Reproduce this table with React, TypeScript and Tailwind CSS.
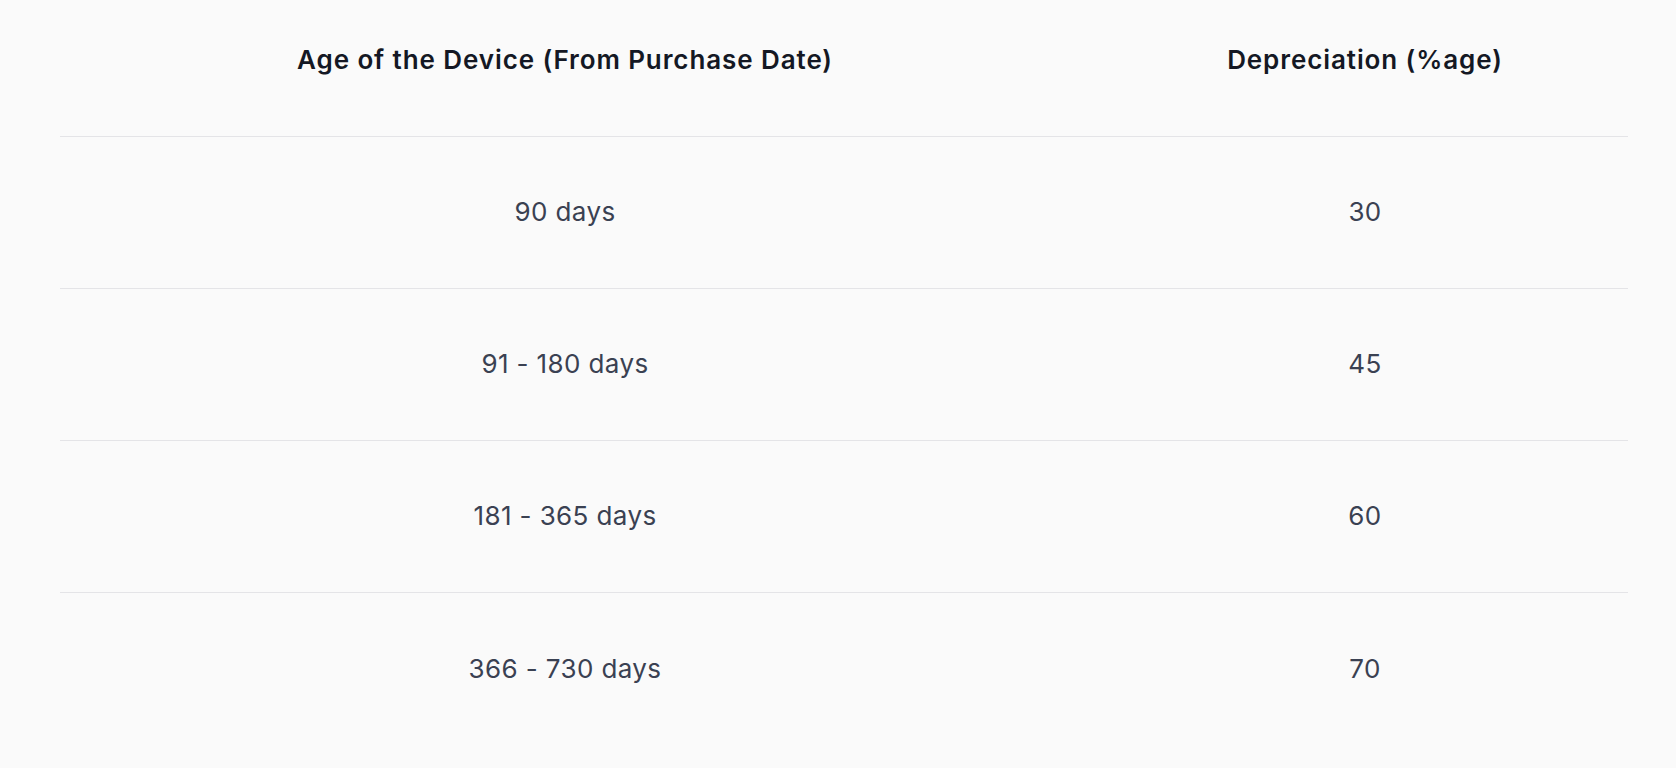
const rows = [
  { age: "90 days", pct: "30" },
  { age: "91 - 180 days", pct: "45" },
  { age: "181 - 365 days", pct: "60" },
  { age: "366 - 730 days", pct: "70" },
];

export default function App() {
  return (
    <div className="min-h-screen bg-[#fafafa] px-[60px] font-['Inter',sans-serif]">
      <div className="w-[1568px]">
        <div className="grid grid-cols-[1010px_1fr] h-[137px] border-b border-[#e4e4e7] pb-[17px] items-center">
          <div className="text-center text-[26px] font-semibold tracking-[0.035em] text-[#141824]">Age of the Device (From Purchase Date)</div>
          <div className="pl-[32px] text-center text-[26px] font-semibold tracking-[0.035em] text-[#141824]">Depreciation (%age)</div>
        </div>
        {rows.map((r, i) => (
          <div
            key={r.age}
            className={`grid grid-cols-[1010px_1fr] h-[152px] pb-[2px] items-center text-[26px] tracking-[0.015em] text-[#3a4152] ${i < rows.length - 1 ? "border-b border-[#e4e4e7]" : ""}`}
          >
            <div className="text-center">{r.age}</div>
            <div className="pl-[32px] text-center">{r.pct}</div>
          </div>
        ))}
      </div>
    </div>
  );
}
